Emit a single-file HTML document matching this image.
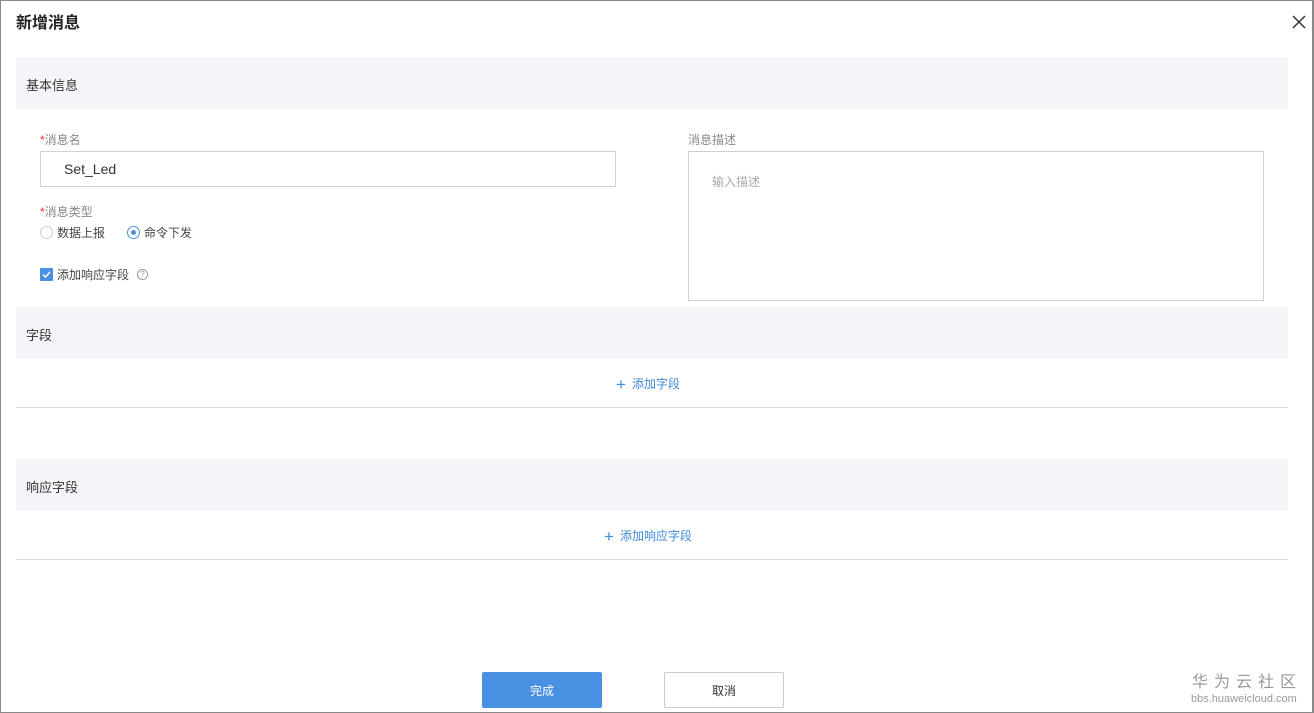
<!DOCTYPE html>
<html><head><meta charset="utf-8"><style>
*{margin:0;padding:0;box-sizing:border-box}
body{width:1314px;height:713px;background:#fff;font-family:"Liberation Sans","Noto Sans CJK SC",sans-serif;position:relative;overflow:hidden;color:#333}
.frame{position:absolute;left:0;top:0;width:1314px;height:713px;border:1px solid #8a8a8a;border-right-width:2px}
.a{position:absolute}
.title{left:16px;top:9px;font-size:16px;font-weight:bold;color:#222}
.sec{position:absolute;left:16px;width:1272px;height:52px;background:#f3f5f9;font-size:13px;padding-left:10px;line-height:57px;color:#333}
.lbl{font-size:12px;color:#888}
.lbl b{color:#e33;font-weight:normal}
.inp{position:absolute;border:1px solid #d0d0d0;background:#fff}
.line{position:absolute;left:16px;width:1272px;height:1px;background:#ddd}
.add{position:absolute;font-size:12px;color:#3f8ad9}
.add span{font-size:17px;margin-right:6px;vertical-align:-2px;font-weight:300}
.radio{display:inline-block;width:13px;height:13px;border:1px solid #ccc;border-radius:50%;vertical-align:-2px;margin-right:4px;position:relative}
.radio.on{border-color:#4a90e2}
.radio.on:after{content:"";position:absolute;left:3px;top:3px;width:5px;height:5px;border-radius:50%;background:#4a90e2}
</style></head><body>
<div class="frame"></div>
<div class="a title">新增消息</div>
<svg class="a" style="left:1292px;top:15px" width="14" height="14"><path d="M1 1L13 13M13 1L1 13" stroke="#333" stroke-width="1.5"/></svg>
<div class="sec" style="top:57px">基本信息</div>
<div class="a lbl" style="left:40px;top:131px"><b>*</b>消息名</div>
<div class="inp" style="left:40px;top:151px;width:576px;height:36px;padding-left:23px;line-height:34px;font-size:14px;color:#333">Set_Led</div>
<div class="a lbl" style="left:40px;top:203px"><b>*</b>消息类型</div>
<div class="a" style="left:40px;top:224px;font-size:12px;color:#444"><i class="radio"></i>数据上报<span style="display:inline-block;width:22px"></span><i class="radio on"></i>命令下发</div>
<div class="a" style="left:40px;top:268px;width:13px;height:13px;background:#4a90e2;border-radius:1px"><svg width="13" height="13"><path d="M3 6.5L5.5 9L10 4" stroke="#fff" stroke-width="1.5" fill="none"/></svg></div>
<div class="a" style="left:57px;top:266px;font-size:12px;color:#444">添加响应字段</div>
<div class="a" style="left:137px;top:269px;width:11px;height:11px;border:1px solid #999;border-radius:50%;font-size:8px;line-height:9px;text-align:center;color:#999">?</div>
<div class="a lbl" style="left:688px;top:131px">消息描述</div>
<div class="inp" style="left:688px;top:151px;width:576px;height:150px;padding:21px 0 0 23px;font-size:12px;color:#aaa">输入描述</div>
<div class="sec" style="top:307px">字段</div>
<div class="add" style="left:616px;top:375px"><span>+</span>添加字段</div>
<div class="line" style="top:407px"></div>
<div class="sec" style="top:459px">响应字段</div>
<div class="add" style="left:604px;top:527px"><span>+</span>添加响应字段</div>
<div class="line" style="top:559px"></div>
<div class="a" style="left:482px;top:672px;width:120px;height:36px;background:#4a90e2;color:#fff;font-size:12px;text-align:center;line-height:38px;border-radius:2px">完成</div>
<div class="a" style="left:664px;top:672px;width:120px;height:36px;border:1px solid #ccc;color:#333;font-size:12px;text-align:center;line-height:36px;border-radius:2px">取消</div>
<div class="a" style="left:1192px;top:673px;font-size:16px;line-height:20px;color:#999;letter-spacing:6px">华为云社区</div>
<div class="a" style="left:1191px;top:693px;font-size:11px;line-height:12px;color:#999">bbs.huaweicloud.com</div>
</body></html>
